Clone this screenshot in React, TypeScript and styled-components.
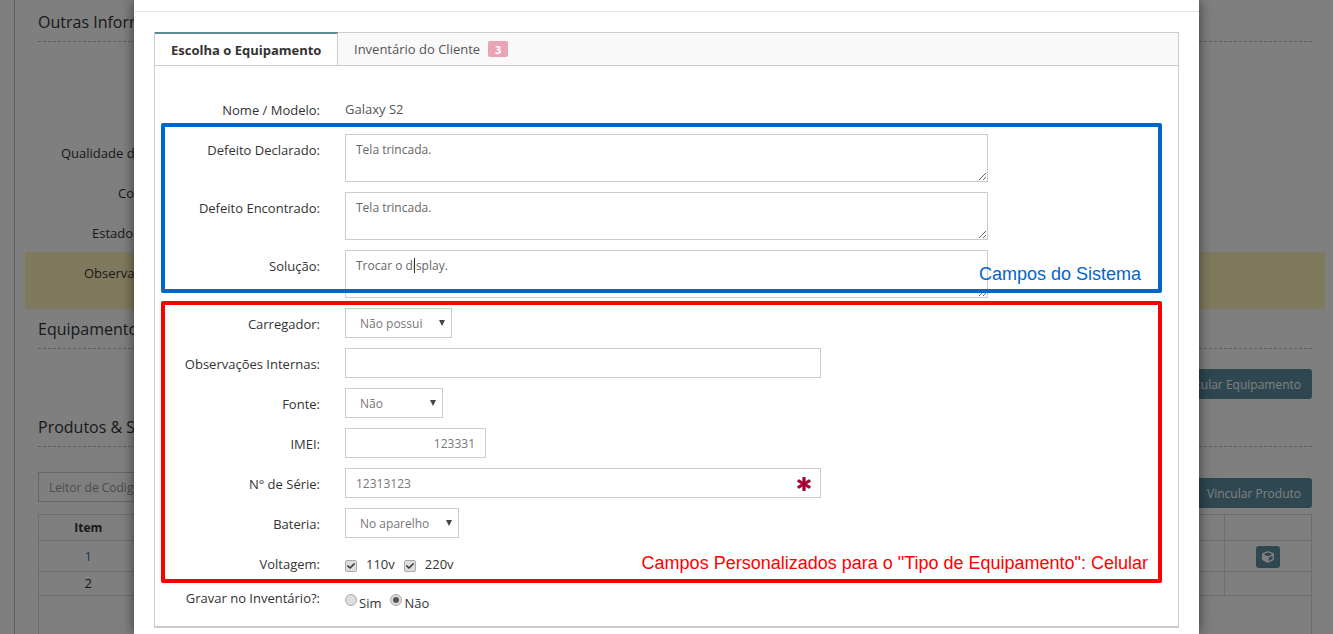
import React from "react";
import styled, { createGlobalStyle } from "styled-components";
import { FaAsterisk, FaCube, FaCheck } from "react-icons/fa";

const Global = createGlobalStyle`
  html, body { margin: 0; padding: 0; height: 100%; overflow: hidden; background: #fff; }
  * { box-sizing: border-box; }
  body { font-family: "Open Sans", "Liberation Sans", sans-serif; font-size: 13px; color: #333; }
`;

const Page = styled.div`
  position: relative;
  width: 1333px;
  height: 634px;
  overflow: hidden;
  background: #fff;
`;

/* background page */
const Rail = styled.div`
  margin-left: 14px;
  height: 634px;
  border-left: 1px solid #bbb;
  padding: 12px 21px 0 23px;
`;
const SectionTitle = styled.h3<{ $top?: number }>`
  margin: ${(p) => p.$top ?? 0}px 0 0;
  height: 30px;
  padding-bottom: 9px;
  font-size: 16px;
  line-height: 20px;
  font-weight: 400;
  color: #333;
  border-bottom: 1px dashed #bbb;
  white-space: nowrap;
`;
const InfoGroup = styled.div`
  margin-top: 91px;
`;
const InfoRow = styled.div<{ $indent: number }>`
  height: 40px;
  padding: 11px 0 0 ${(p) => p.$indent}px;
  line-height: 18px;
  font-size: 13px;
  white-space: nowrap;
`;
const Band = styled.div<{ $indent: number }>`
  height: 57px;
  margin: -1px -13px 0 -13px;
  padding: 12px 0 0 ${(p) => p.$indent + 13}px;
  line-height: 18px;
  background: #fff4bb;
  white-space: nowrap;
`;
const ActionRight = styled.div`
  display: flex;
  justify-content: flex-end;
  margin-top: 20px;
`;
const PrimaryButton = styled.button`
  height: 30px;
  padding: 0 11px 0 40px;
  border: 0;
  border-radius: 3px;
  background: #5c8fa3;
  color: #fff;
  font: 400 12px "Open Sans", sans-serif;
  white-space: nowrap;
`;
const ScannerRow = styled.div`
  display: flex;
  justify-content: space-between;
  align-items: flex-start;
  margin-top: 25px;
  height: 36px;
  ${PrimaryButton} { margin-top: 6px; }
`;
const ScannerInput = styled.input`
  width: 300px;
  height: 30px;
  padding: 0 10px;
  border: 1px solid #ccc;
  font: 400 12px "Open Sans", sans-serif;
  color: #777;
  &::placeholder { color: #999; opacity: 1; }
`;
const TableBox = styled.div`
  margin-top: 6px;
  height: 200px;
  border: 1px solid #ddddc8;
`;
const ItemsTable = styled.table`
  width: 100%;
  border-collapse: collapse;
  table-layout: fixed;
  font-size: 13px;
  th { height: 25px; font-size: 12px; font-weight: 700; border-bottom: 1px solid #ddd; }
  td { text-align: center; border-bottom: 1px solid #ddd; }
  th + th, td + td { border-left: 1px solid #ddd; }
  tbody tr:nth-child(1) td { height: 31px; }
  tbody tr:nth-child(2) td { height: 24px; }
  a { color: #2f78b7; text-decoration: none; }
`;
const CubeButton = styled.span`
  display: inline-flex;
  align-items: center;
  justify-content: center;
  width: 24px;
  height: 22px;
  margin-top: 2px;
  border-radius: 3px;
  background: #5c8fa3;
  color: #fff;
  font-size: 12px;
  vertical-align: middle;
`;
const Overlay = styled.div`
  position: absolute;
  inset: 0;
  background: rgba(0, 0, 0, 0.5);
`;

/* modal */
const Modal = styled.div`
  position: absolute;
  left: 134px;
  top: 0;
  width: 1065px;
  height: 634px;
  background: #fff;
  box-shadow: 0 0 12px rgba(0, 0, 0, 0.55);
  overflow: hidden;
`;
const ModalTop = styled.div`
  height: 12px;
  border-bottom: 1px solid #e5e5e5;
`;
const ModalBody = styled.div`
  padding: 20px 20px 0;
`;
const TabBox = styled.div`
  width: 1025px;
  height: 596px;
  border: 1px solid #ccc;
  border-bottom-width: 2px;
`;
const TabBar = styled.div`
  display: flex;
  height: 33px;
  background: #f9f9f9;
  border-bottom: 1px solid #ccc;
`;
const ActiveTab = styled.div`
  width: 183px;
  height: 33px;
  margin-top: -1px;
  padding: 6px 0 0 16px;
  border-top: 2px solid #5b8a98;
  border-right: 1px solid #ccc;
  background: #fff;
  font-weight: 700;
  line-height: 20px;
  color: #333;
`;
const Tab = styled.div`
  display: flex;
  align-items: center;
  gap: 8px;
  padding: 0 0 0 16px;
  color: #555;
`;
const Badge = styled.span`
  display: inline-flex;
  align-items: center;
  justify-content: center;
  width: 20px;
  height: 16px;
  border-radius: 2px;
  background: #e9a5b6;
  color: #fff;
  font-size: 11px;
  font-weight: 700;
`;
const FormArea = styled.div`
  padding-top: 29px;
`;
const Row = styled.div<{ $h?: number }>`
  display: flex;
  gap: 25px;
  margin-bottom: 10px;
  ${(p) => (p.$h ? `height: ${p.$h}px;` : "")}
`;
const Label = styled.label<{ $pad?: number }>`
  width: 165px;
  flex: none;
  padding-top: ${(p) => p.$pad ?? 7}px;
  text-align: right;
  line-height: 18px;
  color: #333;
  white-space: nowrap;
`;
const StaticValue = styled.div`
  padding-top: 5px;
  line-height: 18px;
  color: #555;
`;
const TextArea = styled.textarea`
  display: block;
  width: 643px;
  height: 48px;
  padding: 6px 10px;
  border: 1px solid #ccc;
  font: 400 12px/18px "Open Sans", sans-serif;
  color: #666;
  outline: none;
  resize: both;
`;
const Input = styled.input<{ $w: number; $right?: boolean }>`
  display: block;
  width: ${(p) => p.$w}px;
  height: 30px;
  padding: 0 10px;
  border: 1px solid #ccc;
  font: 400 12px "Open Sans", sans-serif;
  color: #777;
  outline: none;
  text-align: ${(p) => (p.$right ? "right" : "left")};
`;
const InputWrap = styled.div`
  position: relative;
`;
const Required = styled.span`
  position: absolute;
  right: 10px;
  top: 9px;
  color: #a50034;
  font-size: 14px;
  line-height: 14px;
  svg { stroke: currentColor; stroke-width: 30px; }
`;
const SelectWrap = styled.div<{ $w: number }>`
  position: relative;
  width: ${(p) => p.$w}px;
  height: 30px;
  &::after {
    content: "";
    position: absolute;
    right: 7px;
    top: 12px;
    border-left: 3px solid transparent;
    border-right: 3px solid transparent;
    border-top: 6px solid #444;
  }
`;
const Select = styled.select`
  width: 100%;
  height: 30px;
  padding: 0 0 0 14px;
  border: 1px solid #ccc;
  border-radius: 0;
  background: #fff;
  appearance: none;
  font: 400 12px "Open Sans", sans-serif;
  color: #777;
  outline: none;
`;
const Options = styled.div`
  display: flex;
  align-items: center;
  height: 30px;
  padding-top: 2px;
`;
const CheckBox = styled.span`
  display: inline-flex;
  align-items: center;
  justify-content: center;
  width: 12px;
  height: 12px;
  margin-top: 3px;
  border: 1px solid #aaa;
  border-radius: 2px;
  background: #ddd;
  color: #333;
  font-size: 8px;
`;
const CheckText = styled.span`
  margin: 0 9px 0 9px;
  color: #333;
`;
const RadioRow = styled.div`
  display: flex;
  align-items: flex-start;
  padding-top: 6px;
`;
const Radio = styled.span<{ $on?: boolean }>`
  display: inline-flex;
  align-items: center;
  justify-content: center;
  width: 12px;
  height: 12px;
  border: 1px solid #aaa;
  border-radius: 50%;
  background: #ddd;
  &::after {
    content: "";
    display: ${(p) => (p.$on ? "block" : "none")};
    width: 6px;
    height: 6px;
    border-radius: 50%;
    background: #555;
  }
`;
const RadioText = styled.span`
  margin: 0 9px 0 2px;
  line-height: 18px;
  color: #333;
`;

/* annotations laid over the form */
const Annotation = styled.div<{
  $color: string;
  $left: number;
  $top: number;
  $w: number;
  $h: number;
  $padRight: number;
  $padBottom: number;
}>`
  position: absolute;
  left: ${(p) => p.$left}px;
  top: ${(p) => p.$top}px;
  width: ${(p) => p.$w}px;
  height: ${(p) => p.$h}px;
  display: flex;
  align-items: flex-end;
  justify-content: flex-end;
  padding: 0 ${(p) => p.$padRight}px ${(p) => p.$padBottom}px 0;
  border: 4px solid ${(p) => p.$color};
  border-radius: 2px;
  color: ${(p) => p.$color};
  font: 400 18px/20px "Liberation Sans", Arial, sans-serif;
  white-space: nowrap;
  pointer-events: none;
`;
const TextCursor = styled.div`
  position: absolute;
  left: 414px;
  top: 258px;
  width: 1px;
  height: 15px;
  background: #333;
`;

export default function App() {
  return (
    <Page>
      <Global />
      <Rail>
        <SectionTitle>Outras Informações</SectionTitle>
        <InfoGroup>
          <InfoRow $indent={23}>Qualidade do Serviço:</InfoRow>
          <InfoRow $indent={80}>Contato:</InfoRow>
          <InfoRow $indent={54}>Estado do Aparelho:</InfoRow>
          <Band $indent={46}>Observações:</Band>
        </InfoGroup>
        <SectionTitle $top={10}>Equipamentos</SectionTitle>
        <ActionRight>
          <PrimaryButton>Vincular Equipamento</PrimaryButton>
        </ActionRight>
        <SectionTitle $top={18}>Produtos &amp; Serviços</SectionTitle>
        <ScannerRow>
          <ScannerInput placeholder="Leitor de Codigo de Barras" readOnly />
          <PrimaryButton>Vincular Produto</PrimaryButton>
        </ScannerRow>
        <TableBox>
          <ItemsTable>
            <colgroup>
              <col style={{ width: 99 }} />
              <col />
              <col style={{ width: 87 }} />
            </colgroup>
            <thead>
              <tr>
                <th>Item</th>
                <th></th>
                <th></th>
              </tr>
            </thead>
            <tbody>
              <tr>
                <td><a href="#1">1</a></td>
                <td></td>
                <td><CubeButton><FaCube /></CubeButton></td>
              </tr>
              <tr>
                <td>2</td>
                <td></td>
                <td></td>
              </tr>
            </tbody>
          </ItemsTable>
        </TableBox>
      </Rail>
      <Overlay />
      <Modal>
        <ModalTop />
        <ModalBody>
          <TabBox>
            <TabBar>
              <ActiveTab>Escolha o Equipamento</ActiveTab>
              <Tab>
                Inventário do Cliente <Badge>3</Badge>
              </Tab>
            </TabBar>
            <FormArea>
              <Row $h={29}>
                <Label $pad={6}>Nome / Modelo:</Label>
                <StaticValue>Galaxy S2</StaticValue>
              </Row>
              <Row>
                <Label>Defeito Declarado:</Label>
                <TextArea defaultValue="Tela trincada." />
              </Row>
              <Row>
                <Label>Defeito Encontrado:</Label>
                <TextArea defaultValue="Tela trincada." />
              </Row>
              <Row>
                <Label>Solução:</Label>
                <TextArea defaultValue="Trocar o display." />
              </Row>
              <Row>
                <Label>Carregador:</Label>
                <SelectWrap $w={107}>
                  <Select defaultValue="Não possui"><option>Não possui</option></Select>
                </SelectWrap>
              </Row>
              <Row>
                <Label>Observações Internas:</Label>
                <Input $w={476} defaultValue="" />
              </Row>
              <Row>
                <Label>Fonte:</Label>
                <SelectWrap $w={98}>
                  <Select defaultValue="Não"><option>Não</option></Select>
                </SelectWrap>
              </Row>
              <Row>
                <Label>IMEI:</Label>
                <Input $w={141} $right defaultValue="123331" />
              </Row>
              <Row>
                <Label>N° de Série:</Label>
                <InputWrap>
                  <Input $w={476} defaultValue="12313123" />
                  <Required><FaAsterisk /></Required>
                </InputWrap>
              </Row>
              <Row>
                <Label>Bateria:</Label>
                <SelectWrap $w={114}>
                  <Select defaultValue="No aparelho"><option>No aparelho</option></Select>
                </SelectWrap>
              </Row>
              <Row>
                <Label>Voltagem:</Label>
                <Options>
                  <CheckBox><FaCheck /></CheckBox>
                  <CheckText>110v</CheckText>
                  <CheckBox><FaCheck /></CheckBox>
                  <CheckText>220v</CheckText>
                </Options>
              </Row>
              <Row>
                <Label $pad={1}>Gravar no Inventário?:</Label>
                <RadioRow>
                  <Radio />
                  <RadioText>Sim</RadioText>
                  <Radio $on />
                  <RadioText>Não</RadioText>
                </RadioRow>
              </Row>
            </FormArea>
          </TabBox>
        </ModalBody>
      </Modal>
      <TextCursor />
      <Annotation $color="#0066cc" $left={161} $top={123} $w={1001} $h={170} $padRight={17} $padBottom={5}>
        Campos do Sistema
      </Annotation>
      <Annotation $color="#ff0000" $left={161} $top={301} $w={1001} $h={282} $padRight={10} $padBottom={6}>
        Campos Personalizados para o "Tipo de Equipamento": Celular
      </Annotation>
    </Page>
  );
}
